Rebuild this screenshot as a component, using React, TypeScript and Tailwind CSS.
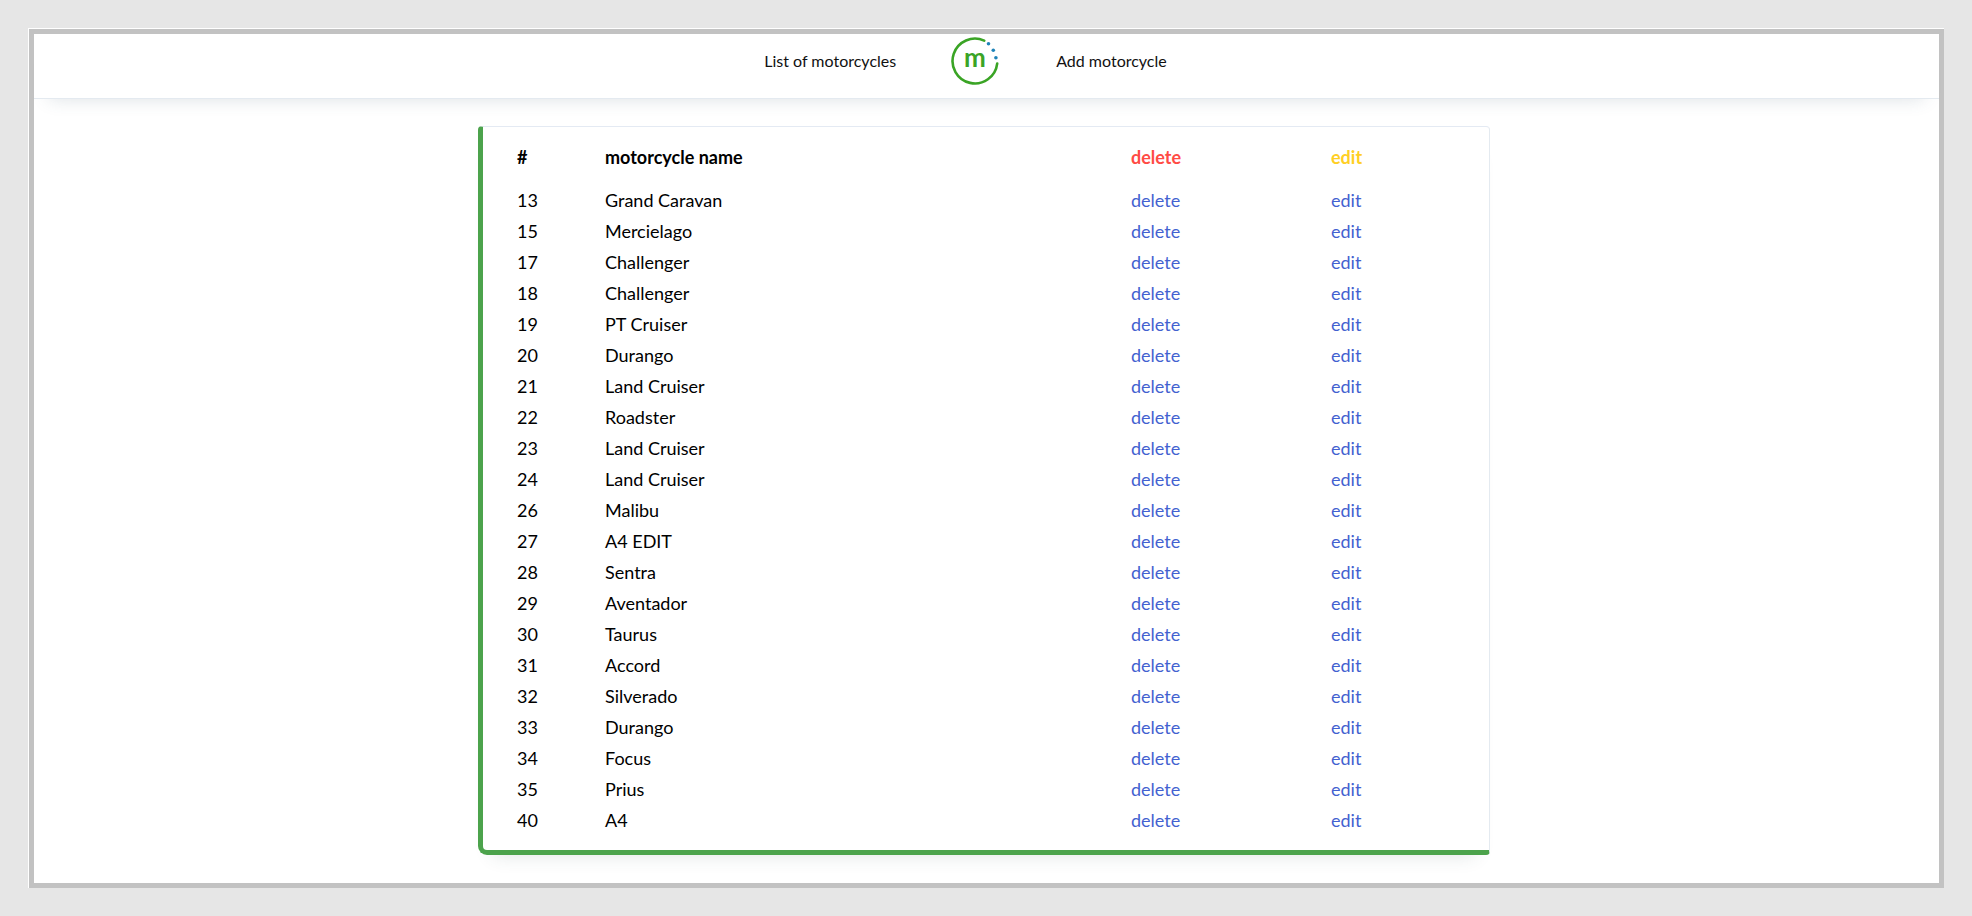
type Motorcycle = { id: number; name: string };

const motorcycles: Motorcycle[] = [
  { id: 13, name: "Grand Caravan" },
  { id: 15, name: "Mercielago" },
  { id: 17, name: "Challenger" },
  { id: 18, name: "Challenger" },
  { id: 19, name: "PT Cruiser" },
  { id: 20, name: "Durango" },
  { id: 21, name: "Land Cruiser" },
  { id: 22, name: "Roadster" },
  { id: 23, name: "Land Cruiser" },
  { id: 24, name: "Land Cruiser" },
  { id: 26, name: "Malibu" },
  { id: 27, name: "A4 EDIT" },
  { id: 28, name: "Sentra" },
  { id: 29, name: "Aventador" },
  { id: 30, name: "Taurus" },
  { id: 31, name: "Accord" },
  { id: 32, name: "Silverado" },
  { id: 33, name: "Durango" },
  { id: 34, name: "Focus" },
  { id: 35, name: "Prius" },
  { id: 40, name: "A4" },
];

function Logo() {
  return (
    <svg viewBox="0 0 50 50" className="h-[50px] w-[50px]" aria-hidden="true">
      <path
        d="M34.2 4.6A22.4 22.4 0 1 0 47.2 27.6"
        fill="none"
        stroke="#3aa425"
        strokeWidth="2.6"
        strokeLinecap="round"
      />
      <circle cx="38.5" cy="7.7" r="1.8" fill="#1f83b8" />
      <circle cx="43.3" cy="14.3" r="1.8" fill="#1f83b8" />
      <circle cx="45.9" cy="21.7" r="1.8" fill="#1f83b8" />
      <text x="25" y="31" textAnchor="middle" fill="#3aa425" className="text-[26px] font-bold">
        m
      </text>
    </svg>
  );
}

function Header() {
  return (
    <header className="flex h-[65px] items-start justify-center border-b border-[#e4eaf0] bg-white pr-[42px] shadow-[0_15px_18px_-15px_rgba(60,90,110,0.18)]">
      <nav className="flex h-[54px] items-center text-base text-[#111111]">
        <a href="#list">List of motorcycles</a>
        <a href="#home" aria-label="Home" className="mr-14 ml-[54px]">
          <Logo />
        </a>
        <a href="#add">Add motorcycle</a>
      </nav>
    </header>
  );
}

function MotorcycleTable() {
  return (
    <table className="w-full table-fixed text-left text-lg leading-[31px]">
      <colgroup>
        <col className="w-[88px]" />
        <col />
        <col className="w-[200px]" />
        <col className="w-[158px]" />
      </colgroup>
      <thead>
        <tr className="h-[43px] align-top">
          <th className="p-0 font-bold">#</th>
          <th className="p-0 font-bold">motorcycle name</th>
          <th className="p-0 font-bold text-[#ff4b45]">delete</th>
          <th className="p-0 font-bold text-[#ffcf24]">edit</th>
        </tr>
      </thead>
      <tbody>
        {motorcycles.map((m) => (
          <tr key={m.id}>
            <td className="p-0">{m.id}</td>
            <td className="p-0">{m.name}</td>
            <td className="p-0">
              <a href={`#delete-${m.id}`} className="text-[#4361d0]">delete</a>
            </td>
            <td className="p-0">
              <a href={`#edit-${m.id}`} className="text-[#4361d0]">edit</a>
            </td>
          </tr>
        ))}
      </tbody>
    </table>
  );
}

export default function App() {
  return (
    <div className="min-h-screen bg-[#e6e6e6] p-7 font-['Lato',sans-serif] text-black">
      <div className="border-t border-l border-white">
        <div className="border-[5px] border-[#c2c2c2] bg-white">
          <Header />
          <main className="flex justify-center pt-[27px] pr-[5px] pb-7">
            <section className="w-full max-w-[1012px] rounded-[4px] rounded-bl-[9px] border-t border-r border-b-[5px] border-l-[5px] border-t-[#e4eaf3] border-r-[#e4eaf0] border-b-[#4ca34c] border-l-[#4ca34c] pt-[15px] pb-[14px] pl-[34px] shadow-[0_15px_18px_-15px_rgba(50,80,80,0.16)]">
              <MotorcycleTable />
            </section>
          </main>
        </div>
      </div>
    </div>
  );
}
